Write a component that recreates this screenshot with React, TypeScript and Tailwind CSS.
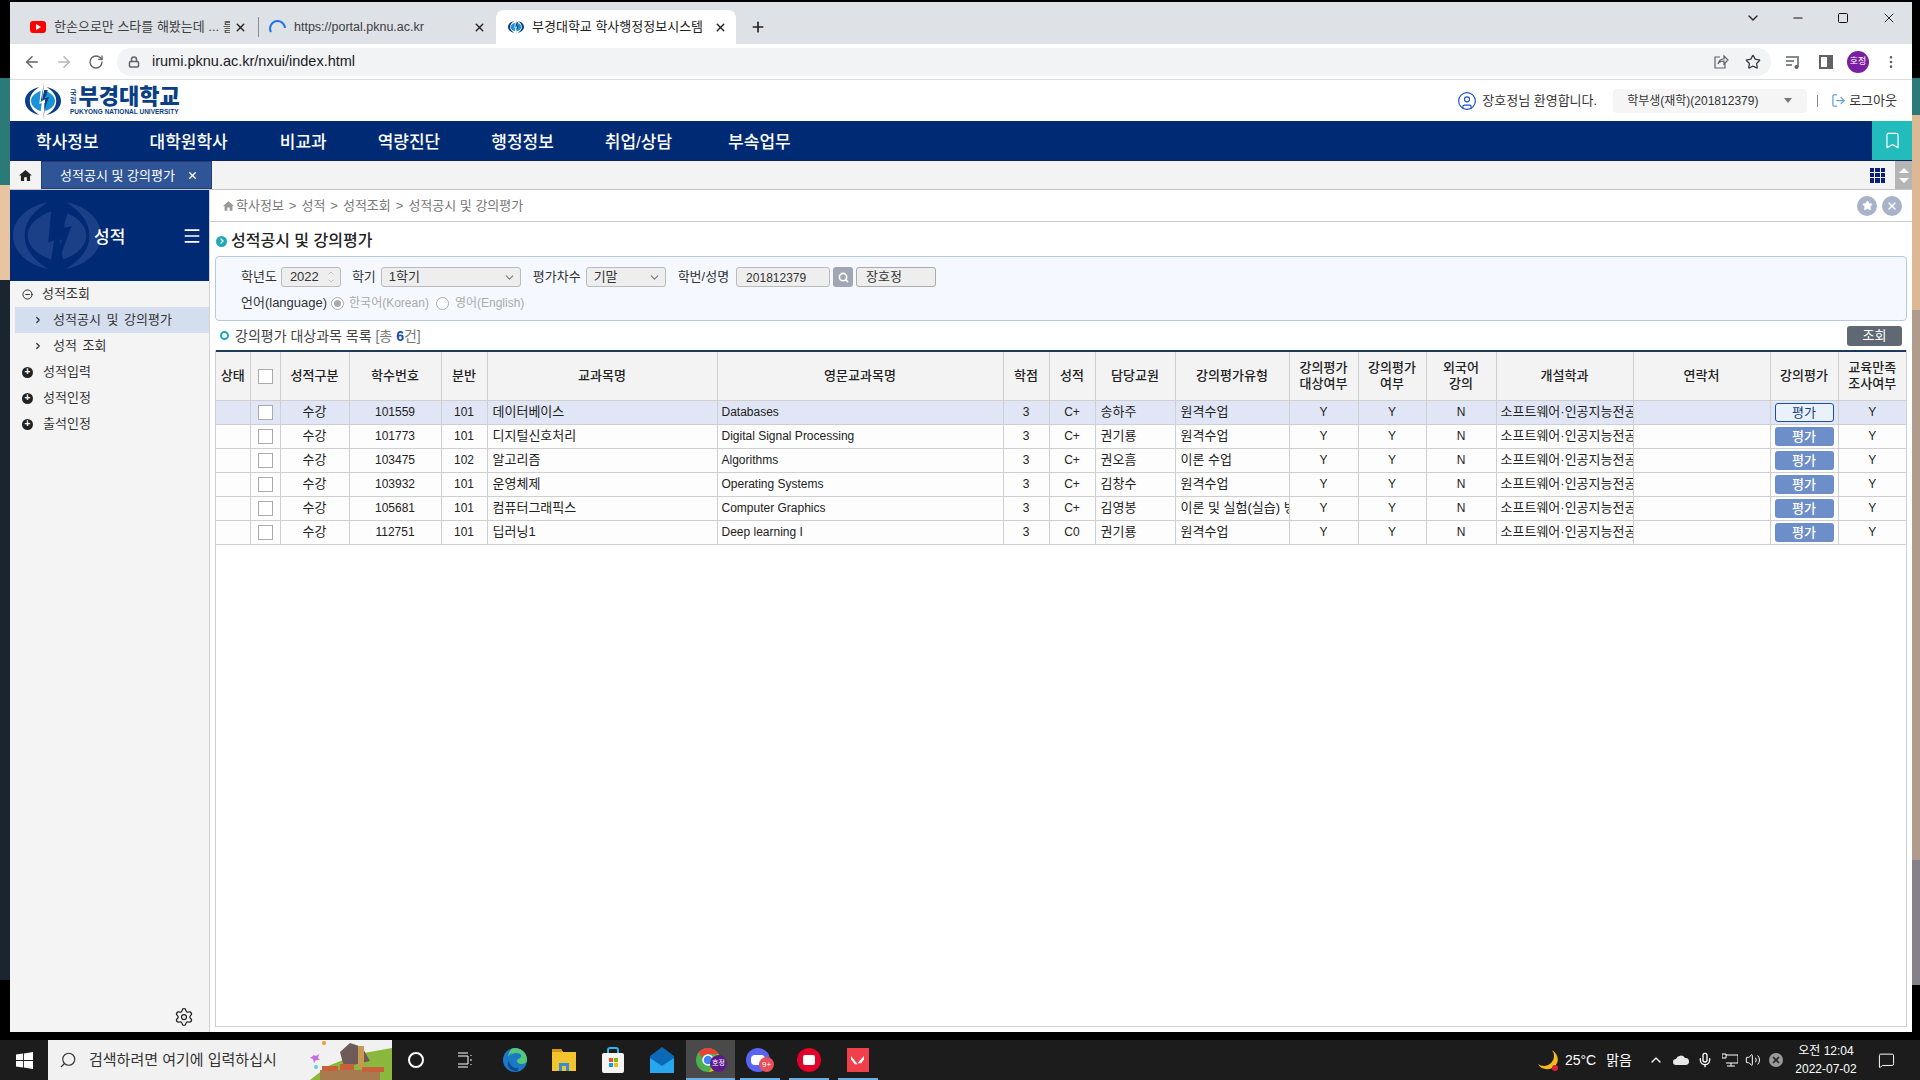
import React from 'react';
import {
  ArrowLeft, ArrowRight, RotateCw, Lock, Star, Search, ChevronDown, ChevronUp, Minus, Square, X, Plus,
  Settings, Menu, Bookmark, ChevronRight, EllipsisVertical, LogOut, CircleUser, CircleMinus, Mic, Volume2,
  MessageSquare,
} from 'lucide-react';

const rows = [
  { no: '101559', sec: '101', name: '데이터베이스', en: 'Databases', grade: 'C+', prof: '송하주', type: '원격수업' },
  { no: '101773', sec: '101', name: '디지털신호처리', en: 'Digital Signal Processing', grade: 'C+', prof: '권기룡', type: '원격수업' },
  { no: '103475', sec: '102', name: '알고리즘', en: 'Algorithms', grade: 'C+', prof: '권오흠', type: '이론 수업' },
  { no: '103932', sec: '101', name: '운영체제', en: 'Operating Systems', grade: 'C+', prof: '김창수', type: '원격수업' },
  { no: '105681', sec: '101', name: '컴퓨터그래픽스', en: 'Computer Graphics', grade: 'C+', prof: '김영봉', type: '이론 및 실험(실습) 병행' },
  { no: '112751', sec: '101', name: '딥러닝1', en: 'Deep learning I', grade: 'C0', prof: '권기룡', type: '원격수업' },
];

const colWidths = [34, 30, 69, 92, 46, 230, 286, 46, 46, 80, 114, 69, 68, 70, 137, 137, 68, 68];

const Emblem = ({ outer, inner, bolt, className }: { outer: string; inner: string; bolt: string; className: string }) => (
  <svg viewBox="0 0 30 38" preserveAspectRatio="none" className={className}>
    <path d="M12 5C4 7 0 13 0 19s4 12 12 14C7 29 4 25 4 19S7 9 12 5Z" fill={outer} />
    <path d="M18 5c8 2 12 8 12 14s-4 12-12 14c5-4 8-8 8-14S23 9 18 5Z" fill={outer} />
    <path d="M13 9C8 11 5 15 5 19s3 8 8 10l1-8-2 1Z" fill={inner} />
    <path d="M17 9c5 2 8 6 8 10s-3 8-8 10l-1-8 2-1Z" fill={inner} />
    <path d="M16 0 13 20l4-3-2 21 3-21-4 2Z" fill={bolt} />
    <path d="M16 8 14 19l3-2-1 11 4-13-3 1 2-8Z" fill={bolt} />
  </svg>
);

const ChromeTabs = () => (
  <div className="flex h-[42px] bg-[#dee1e6] items-end text-[12.5px] text-[#3c4043]">
    <div className="flex items-center h-[34px] w-[248px] pl-5 pr-2">
      <span className="w-4 h-3 rounded-[3px] bg-[#ff0000] flex items-center justify-center shrink-0">
        <span className="border-l-[5px] border-l-white border-y-[3px] border-y-transparent" />
      </span>
      <span className="ml-2 w-[176px] overflow-hidden whitespace-nowrap text-[13px]">한손으로만 스타를 해봤는데 ... 를</span>
      <X size={13} strokeWidth={2.5} className="ml-1 text-[#222]" />
    </div>
    <span className="w-px h-[20px] mb-[7px] bg-[#8b8d90]" />
    <div className="flex items-center h-[34px] w-[237px] pl-2.5 pr-2">
      <svg viewBox="0 0 18 18" className="w-[18px] h-[18px] shrink-0"><path d="M2 14A7.5 7.5 0 0 1 9 3a7.5 7.5 0 0 1 7 7" fill="none" stroke="#1a73e8" strokeWidth="2" /></svg>
      <span className="ml-[7px] w-[179px] whitespace-nowrap">https://portal.pknu.ac.kr</span>
      <X size={13} strokeWidth={2.5} className="text-[#222]" />
    </div>
    <div className="flex items-center h-[34px] w-[240px] pl-3 pr-2 bg-white rounded-t-lg">
      <Emblem outer="#0a3f86" inner="#1a92d6" bolt="#0a3f86" className="w-4 h-4 shrink-0" />
      <span className="ml-2 w-[178px] whitespace-nowrap text-[#222] text-[13px]">부경대학교 학사행정정보시스템</span>
      <X size={13} strokeWidth={2.5} className="ml-1 text-[#222]" />
    </div>
    <Plus size={16} strokeWidth={2.5} className="ml-[14px] mb-[9px] text-[#222]" />
    <div className="ml-auto flex items-center self-start h-[32px]">
      <ChevronDown size={16} className="text-[#222] mr-[30px]" />
      <Minus size={14} className="text-[#111] mr-[32px]" />
      <Square size={12} className="text-[#111] mr-[32px]" />
      <X size={16} strokeWidth={1.3} className="text-[#111] mr-[15px]" />
    </div>
  </div>
);

const ChromeToolbar = () => (
  <div className="flex items-center h-[36px] bg-white border-b border-[#dadce0] text-[#5f6368]">
    <ArrowLeft size={18} className="ml-[13px]" />
    <ArrowRight size={18} className="ml-[14px] text-[#b4b6b9]" />
    <RotateCw size={16} className="ml-[15px]" />
    <div className="ml-[13px] flex items-center w-[1654px] h-[28px] rounded-full bg-[#f1f3f4]">
      <Lock size={12} strokeWidth={3} className="ml-[11px]" />
      <span className="ml-[12px] text-[14.5px] text-[#202124] pt-px">irumi.pknu.ac.kr/nxui/index.html</span>
      <svg viewBox="0 0 16 16" className="ml-auto w-[16px] h-[16px]">
        <path d="M7 3H2v11h10V9M5 10c1-4 3-5 6-5V2l4 4-4 4V7C8 7 6 8 5 10Z" fill="none" stroke="#5f6368" strokeWidth="1.2" />
      </svg>
      <Star size={16} className="ml-[16px] mr-[10px] text-[#3c4043]" />
    </div>
    <svg viewBox="0 0 16 16" className="ml-[14px] w-[16px] h-[16px]">
      <path d="M1 3h13M1 7h8M1 11h6" stroke="#5f6368" strokeWidth="1.5" fill="none" />
      <path d="M13 4v9" stroke="#5f6368" strokeWidth="1.5" />
      <circle cx="11.5" cy="13" r="2" fill="#5f6368" />
    </svg>
    <span className="ml-[18px] w-[14px] h-[14px] border-2 border-[#5f6368] border-r-[6px]" />
    <span className="ml-[14px] w-[22px] h-[22px] rounded-full bg-[#7b1fa2] text-white text-[9px] flex items-center justify-center">호정</span>
    <EllipsisVertical size={16} className="ml-[14px]" />
  </div>
);

const SiteHeader = () => (
  <div className="flex items-center h-[41px] bg-white text-[13px] text-[#333]">
    <Emblem outer="#0a3f86" inner="#1a92d6" bolt="#0a3f86" className="ml-[15px] w-[36px] h-[38px] shrink-0" />
    <div className="ml-[9px] flex flex-col w-[110px]">
      <div className="flex items-center h-[22px]">
        <span className="flex flex-col text-[7px] leading-[8px] font-bold text-[#0a3f86]"><span>국</span><span>립</span></span>
        <span className="ml-[2px] text-[22px] leading-[22px] font-black text-[#0a3f86]">부경대학교</span>
      </div>
      <span className="text-[6.5px] leading-[8px] font-bold text-[#0a3f86] whitespace-nowrap">PUKYONG NATIONAL UNIVERSITY</span>
    </div>
    <div className="ml-auto flex items-center">
      <CircleUser size={20} strokeWidth={1.4} className="text-[#1d4fc4]" />
      <span className="ml-[5px]">장호정님 환영합니다.</span>
      <div className="ml-[16px] flex items-center w-[194px] h-[24px] rounded bg-[#f5f5f5] pl-[14px] text-[12px]">
        <span>학부생(재학)(201812379)</span>
        <span className="ml-auto mr-[15px] border-t-[5px] border-t-[#777] border-x-[4px] border-x-transparent" />
      </div>
      <span className="ml-[10px] w-px h-[12px] bg-[#888]" />
      <LogOut size={15} className="ml-[13px] text-[#6b9fe0]" />
      <span className="ml-[3px] mr-[15px]">로그아웃</span>
    </div>
  </div>
);

const NavBar = () => (
  <div className="flex h-[40px] bg-[#002a73] border-b border-[#14205a]">
    <div className="flex items-center pl-[26px] pt-[4px] text-[17px] font-medium text-white">
      <span>학사정보</span>
      <span className="ml-[51px]">대학원학사</span>
      <span className="ml-[52px]">비교과</span>
      <span className="ml-[51px]">역량진단</span>
      <span className="ml-[51px]">행정정보</span>
      <span className="ml-[51px]">취업/상담</span>
      <span className="ml-[56px]">부속업무</span>
    </div>
    <div className="ml-auto w-[40px] bg-[#22bcbc] flex items-center justify-center">
      <Bookmark size={19} strokeWidth={1.5} className="text-white" />
    </div>
  </div>
);

const TabBar = () => (
  <div className="flex items-stretch h-[29px] bg-[#f3f3f3] border-b border-[#c4c4c4]">
    <div className="w-[31px] flex items-center justify-center">
      <svg viewBox="0 0 14 12" className="w-[13px] h-[11px]"><path d="M7 0 0 6h2v6h3.5V8h3v4H12V6h2Z" fill="#222" /></svg>
    </div>
    <div className="flex items-center w-[171px] bg-[#2f5597] border border-[#1e3f80] text-white text-[13px] pl-[18px] pt-px">
      <span>성적공시 및 강의평가</span>
      <X size={11} strokeWidth={3} className="ml-[12px]" />
    </div>
    <div className="ml-auto grid grid-cols-3 gap-px w-[15px] h-[15px] self-center mr-[10px]">
      {Array.from({ length: 9 }).map((_, i) => <span key={i} className="bg-[#0b1f7a]" />)}
    </div>
    <div className="w-[17px] bg-[#b5b5b5] flex flex-col items-center justify-center text-white">
      <span className="border-b-[5px] border-b-white border-x-[5px] border-x-transparent mb-[5px]" />
      <span className="border-t-[5px] border-t-white border-x-[5px] border-x-transparent" />
    </div>
  </div>
);

const Sidebar = () => (
  <div className="relative flex flex-col w-[200px] shrink-0 bg-[#f4f4f4] border-r border-[#d2d2d2] text-[13px] text-[#333]">
    <div className="relative flex items-center h-[91px] bg-[#002a73] overflow-hidden">
      <Emblem outer="#1b4088" inner="#1b4088" bolt="#002a73" className="absolute left-[3px] top-0 w-[88px] h-[91px]" />
      <span className="relative ml-[84px] pt-[4px] text-[17px] font-medium text-white">성적</span>
      <Menu size={20} className="relative ml-auto mr-[7px] text-white" />
    </div>
    <div className="flex items-center h-[26px] pl-[12px]">
      <CircleMinus size={11} className="text-[#222]" />
      <span className="ml-[9px]">성적조회</span>
    </div>
    <div className="flex items-center h-[26px] ml-[5px] pl-[18px] bg-[#d5deef]">
      <ChevronRight size={10} strokeWidth={3} />
      <span className="ml-[10px] [word-spacing:2px]">성적공시 및 강의평가</span>
    </div>
    <div className="flex items-center h-[26px] ml-[5px] pl-[18px]">
      <ChevronRight size={10} strokeWidth={3} />
      <span className="ml-[10px] [word-spacing:2px]">성적 조회</span>
    </div>
    {['성적입력', '성적인정', '출석인정'].map((t) => (
      <div key={t} className="flex items-center h-[26px] pl-[12px]">
        <span className="w-[11px] h-[11px] rounded-full bg-[#222] text-white text-[10px] leading-[10px] font-bold flex items-center justify-center">+</span>
        <span className="ml-[10px]">{t}</span>
      </div>
    ))}
    <Settings size={20} strokeWidth={1.5} className="mt-auto mb-[5px] ml-[164px] text-[#222]" />
  </div>
);

const FieldLabel = ({ children, className }: { children: React.ReactNode; className: string }) => (
  <span className={`text-[13px] text-[#333] whitespace-nowrap ${className}`}>{children}</span>
);

const Select = ({ value, className }: { value: string; className: string }) => (
  <div className={`flex items-center h-[20px] bg-[#eeeeee] border border-[#bbb] rounded-[3px] ${className}`}>
    <span>{value}</span>
    <ChevronDown size={13} className="ml-auto mr-[4px] text-[#777]" />
  </div>
);

const SearchBox = () => (
  <div className="flex flex-col h-[65px] w-[1692px] bg-[#f5f8ff] border border-[#b8c8e4] rounded-[4px] text-[13px] text-[#333]">
    <div className="flex items-center h-[20px] mt-[10px] pl-[25px]">
      <FieldLabel className="">학년도</FieldLabel>
      <div className="ml-[4px] flex items-center w-[60px] h-[20px] pl-[8px] bg-[#eeeeee] border border-[#bbb] rounded-[3px]">
        <span>2022</span>
        <span className="ml-auto mr-[5px] flex flex-col text-[#aaa]"><ChevronUp size={8} /><ChevronDown size={8} /></span>
      </div>
      <FieldLabel className="ml-[11px]">학기</FieldLabel>
      <Select value="1학기" className="ml-[5px] w-[140px] pl-[7px]" />
      <FieldLabel className="ml-[12px]">평가차수</FieldLabel>
      <Select value="기말" className="ml-[5px] w-[80px] pl-[7px]" />
      <FieldLabel className="ml-[12px]">학번/성명</FieldLabel>
      <div className="ml-[7px] flex items-center w-[94px] h-[20px] pl-[9px] bg-[#eeeeee] border border-[#bbb] rounded-[3px] text-[12px] pt-px">201812379</div>
      <div className="ml-[3px] flex items-center justify-center w-[20px] h-[20px] bg-[#a0a6b3] rounded-[3px]">
        <Search size={11} strokeWidth={3.5} className="text-white" />
      </div>
      <div className="ml-[3px] flex items-center w-[80px] h-[20px] pl-[9px] bg-[#eeeeee] border border-[#aaa] rounded-[3px]">장호정</div>
    </div>
    <div className="flex items-center h-[20px] mt-[6px] pl-[25px]">
      <FieldLabel className="">언어(language)</FieldLabel>
      <span className="ml-[4px] flex items-center justify-center w-[13px] h-[13px] rounded-full border border-[#aaa] bg-white">
        <span className="w-[7px] h-[7px] rounded-full bg-[#aaa]" />
      </span>
      <span className="ml-[5px] text-[#aaa] text-[12px]">한국어(Korean)</span>
      <span className="ml-[7px] w-[13px] h-[13px] rounded-full border border-[#aaa] bg-white" />
      <span className="ml-[6px] text-[#aaa] text-[12px]">영어(English)</span>
    </div>
  </div>
);

const headers = ['상태', '', '성적구분', '학수번호', '분반', '교과목명', '영문교과목명', '학점', '성적', '담당교원', '강의평가유형'];

const GradesTable = () => (
  <div className="flex-1 w-[1692px] border-x border-b border-[#cfcfcf] overflow-hidden">
    <table className="table-fixed border-collapse text-[13px] text-[#222] w-[1690px] border-t-2 border-t-[#1b3a5c]">
      <colgroup>
        {colWidths.map((w, i) => <col key={i} style={{ width: w }} />)}
      </colgroup>
      <thead>
        <tr className="h-[49px] bg-[#f3f3f3] font-medium">
          {headers.map((h, i) => (
            <th key={i} className="font-medium text-center border-r border-b border-[#cfcfcf] p-0 leading-4">
              {i === 1 ? <span className="inline-block align-middle w-[15px] h-[15px] bg-white border border-[#aaa]" /> : h}
            </th>
          ))}
          <th className="font-medium border-r border-b border-[#cfcfcf] p-0 leading-4">강의평가<br />대상여부</th>
          <th className="font-medium border-r border-b border-[#cfcfcf] p-0 leading-4">강의평가<br />여부</th>
          <th className="font-medium border-r border-b border-[#cfcfcf] p-0 leading-4">외국어<br />강의</th>
          <th className="font-medium border-r border-b border-[#cfcfcf] p-0 leading-4">개설학과</th>
          <th className="font-medium border-r border-b border-[#cfcfcf] p-0 leading-4">연락처</th>
          <th className="font-medium border-r border-b border-[#cfcfcf] p-0 leading-4">강의평가</th>
          <th className="font-medium border-b border-[#cfcfcf] p-0 leading-4">교육만족<br />조사여부</th>
        </tr>
      </thead>
      <tbody>
        {rows.map((r, i) => (
          <tr key={r.no} className={`h-[24px] ${i === 0 ? 'bg-[#e0e6f5]' : 'bg-[#fdfdfd]'}`}>
            <td className="border-r border-b border-[#cfcfcf] p-0" />
            <td className="border-r border-b border-[#cfcfcf] p-0 text-center">
              <span className="inline-block align-middle w-[15px] h-[15px] bg-white border border-[#aaa]" />
            </td>
            <td className="border-r border-b border-[#cfcfcf] p-0 text-center">수강</td>
            <td className="border-r border-b border-[#cfcfcf] p-0 text-center text-[12px]">{r.no}</td>
            <td className="border-r border-b border-[#cfcfcf] p-0 text-center text-[12px]">{r.sec}</td>
            <td className="border-r border-b border-[#cfcfcf] p-0 pl-[5px]">{r.name}</td>
            <td className="border-r border-b border-[#cfcfcf] p-0 pl-[4px] text-[12px]">{r.en}</td>
            <td className="border-r border-b border-[#cfcfcf] p-0 text-center text-[12px]">3</td>
            <td className="border-r border-b border-[#cfcfcf] p-0 text-center text-[12px]">{r.grade}</td>
            <td className="border-r border-b border-[#cfcfcf] p-0 pl-[5px]">{r.prof}</td>
            <td className="border-r border-b border-[#cfcfcf] p-0 pl-[5px] overflow-hidden whitespace-nowrap">{r.type}</td>
            <td className="border-r border-b border-[#cfcfcf] p-0 text-center text-[12px]">Y</td>
            <td className="border-r border-b border-[#cfcfcf] p-0 text-center text-[12px]">Y</td>
            <td className="border-r border-b border-[#cfcfcf] p-0 text-center text-[12px]">N</td>
            <td className="border-r border-b border-[#cfcfcf] p-0 pl-[4px] overflow-hidden whitespace-nowrap">소프트웨어·인공지능전공</td>
            <td className="border-r border-b border-[#cfcfcf] p-0" />
            <td className="border-r border-b border-[#cfcfcf] p-0">
              <button className={`block mx-auto w-[59px] h-[19px] rounded-[3px] text-[13px] leading-[15px] ${i === 0 ? 'bg-[#eaf1fb] border border-[#1a4fa0] text-[#1a3f85]' : 'bg-[#6c8ec9] text-white font-medium'}`}>평가</button>
            </td>
            <td className="border-b border-[#cfcfcf] p-0 text-center text-[12px]">Y</td>
          </tr>
        ))}
      </tbody>
    </table>
  </div>
);

const Main = () => (
  <div className="flex flex-col flex-1 min-w-0 bg-white">
    <div className="flex items-center h-[32px] border-b border-[#cccccc] pl-[13px] text-[13px] text-[#777]">
      <svg viewBox="0 0 14 12" className="w-[11px] h-[10px]"><path d="M7 0 0 6h2v6h3.5V8h3v4H12V6h2Z" fill="#999" /></svg>
      <span className="ml-[2px] flex gap-[5px]">
        <span>학사정보</span><span>&gt;</span><span>성적</span><span>&gt;</span><span>성적조회</span><span>&gt;</span><span>성적공시 및 강의평가</span>
      </span>
      <span className="ml-auto flex gap-[5px] mr-[10px]">
        <span className="w-[20px] h-[20px] rounded-full bg-[#a8b2c8] flex items-center justify-center"><Star size={11} fill="white" className="text-white" /></span>
        <span className="w-[20px] h-[20px] rounded-full bg-[#a8b2c8] flex items-center justify-center"><X size={12} strokeWidth={3} className="text-white" /></span>
      </span>
    </div>
    <div className="flex items-center h-[34px] pl-[6px] pt-[4px]">
      <span className="w-[11px] h-[11px] rounded-full bg-[#1fa8b8] flex items-center justify-center"><ChevronRight size={8} strokeWidth={4} className="text-white" /></span>
      <span className="ml-[4px] text-[16px] font-medium text-[#222]">성적공시 및 강의평가</span>
    </div>
    <div className="pl-[5px] flex flex-col flex-1 pb-[5px]">
      <SearchBox />
      <div className="flex items-center h-[29px] w-[1692px]">
        <span className="ml-[5px] w-[9px] h-[9px] rounded-full border-[2.5px] border-[#1fa8b8]" />
        <span className="ml-[6px] pt-px text-[14px] text-[#444]">강의평가 대상과목 목록 <span className="text-[#777]">[총 <b className="text-[#1a4fa0]">6</b>건]</span></span>
        <span className="ml-auto mr-[5px] flex items-center justify-center w-[55px] h-[20px] rounded-[3px] bg-[#606873] text-white text-[13px]">조회</span>
      </div>
      <GradesTable />
    </div>
  </div>
);

const TaskSlot = ({ children, className }: { children: React.ReactNode; className: string }) => (
  <div className={`relative flex items-center justify-center w-[49px] h-full ${className}`}>{children}</div>
);

const Taskbar = () => (
  <div className="flex h-[40px] bg-[#1c1c1c] text-white items-center">
    <div className="w-[48px] flex justify-center">
      <svg viewBox="0 0 16 16" className="w-[17px] h-[17px]"><path d="M0 2.3 6.6 1.4v6.2H0ZM7.4 1.3 16 0v7.6H7.4ZM0 8.4h6.6v6.2L0 13.7ZM7.4 8.4H16V16l-8.6-1.3Z" fill="white" /></svg>
    </div>
    <div className="relative flex items-center w-[344px] h-[40px] bg-[#f1f1f1] overflow-hidden text-[#333]">
      <Search size={18} strokeWidth={1.5} className="ml-[11px] -scale-x-100" />
      <span className="ml-[12px] text-[15px] whitespace-nowrap">검색하려면 여기에 입력하십시</span>
      <svg viewBox="0 0 82 40" className="absolute right-0 top-0 w-[82px] h-[40px]">
        <circle cx="14" cy="3" r="2" fill="#f0a020" />
        <path d="M3 15l3 1 3-2-1 4 2 2-4 0-2 3-1-4-3-1 3-2Z" fill="#c86ae0" />
        <circle cx="6" cy="27" r="2" fill="#5cd0e8" />
        <path d="M0 40 18 26l30-12 34-6v32Z" fill="#8ab83c" />
        <path d="M30 12 40 3l12 4 8 14-26 6Z" fill="#6e5a58" />
        <rect x="48" y="6" width="6" height="22" fill="#c89a50" />
        <path d="M10 30h60v10H10Z" fill="#a87a50" />
        <path d="M12 26h16v5H12ZM30 24h14v6H30ZM52 27h22v5H52Z" fill="#c9603c" />
      </svg>
    </div>
    <TaskSlot className="!w-[48px]"><span className="w-[16px] h-[16px] rounded-full border-[2.5px] border-white" /></TaskSlot>
    <TaskSlot className="!w-[50px]">
      <svg viewBox="0 0 16 16" className="w-[16px] h-[16px]"><path d="M1 1h10M1 15h10M1 4h10v8H1M14 3v1M14 7v2M14 12v1" fill="none" stroke="white" strokeWidth="1" /></svg>
    </TaskSlot>
    <TaskSlot className="">
      <svg viewBox="0 0 24 24" className="w-[24px] h-[24px]"><circle cx="12" cy="12" r="12" fill="#1b78c4" /><path d="M12 0a12 12 0 0 1 12 12c0 3-3 4-6 4-2 0-4-1-4-3 0-3 5-2 4-6-1-2-6-3-10 0C10 3 7 6 5 9c1-6 3-9 7-9Z" fill="#52c878" /><path d="M6 12c0 5 4 9 10 8l-2 3C6 23 3 17 6 12Z" fill="#0d4a94" /></svg>
    </TaskSlot>
    <TaskSlot className="">
      <svg viewBox="0 0 24 22" className="w-[24px] h-[22px]"><path d="M0 0h9l2 3h13v19H0Z" fill="#f4c430" /><path d="M0 0h9l2 3H0Z" fill="#d9960f" /><path d="M7 22v-8h10v8h-3v-5h-4v5Z" fill="#2f8fd8" /></svg>
    </TaskSlot>
    <TaskSlot className="">
      <svg viewBox="0 0 22 26" className="w-[22px] h-[26px]"><path d="M6 6V3a2 2 0 0 1 2-2h6a2 2 0 0 1 2 2v3" fill="none" stroke="#29b6e8" strokeWidth="2" /><rect y="6" width="22" height="20" rx="2" fill="#f4f4f4" /><path d="M7 11h4v4H7Z" fill="#f25022" /><path d="M12 11h4v4h-4Z" fill="#7fba00" /><path d="M7 16h4v4H7Z" fill="#00a4ef" /><path d="M12 16h4v4h-4Z" fill="#ffb900" /></svg>
    </TaskSlot>
    <TaskSlot className="">
      <svg viewBox="0 0 24 26" className="w-[24px] h-[26px]"><path d="M12 0 24 9v17H0V9Z" fill="#0a6ab8" /><path d="M0 11 12 19l12-8v15H0Z" fill="#27a8ee" /><path d="M3 9 12 2l9 7-9 7Z" fill="#0a6ab8" /></svg>
    </TaskSlot>
    <TaskSlot className="bg-[#4a4a4a]">
      <svg viewBox="0 0 24 24" className="w-[24px] h-[24px] -ml-[6px]"><circle cx="12" cy="12" r="12" fill="#4caf50" /><path d="M12 0a12 12 0 0 1 10.4 6H12a6 6 0 0 0-5.8 4.5L3 4a12 12 0 0 1 9-4Z" fill="#ea4335" /><path d="M22.4 6A12 12 0 0 1 13 24l5-8.5A6 6 0 0 0 17 8Z" fill="#fbbc05" /><circle cx="12" cy="12" r="5" fill="#4285f4" stroke="white" strokeWidth="1.5" /></svg>
      <span className="absolute left-[24px] top-[15px] w-[17px] h-[17px] rounded-full bg-[#5c1a8c] text-[7px] flex items-center justify-center">호정</span>
      <span className="absolute bottom-0 inset-x-0 h-[2px] bg-[#6ab0e4]" />
    </TaskSlot>
    <TaskSlot className="">
      <span className="w-[24px] h-[24px] rounded-full bg-[#5865f2] flex items-center justify-center -ml-[4px]">
        <span className="w-[14px] h-[10px] rounded-[4px] bg-white" />
      </span>
      <span className="absolute left-[24px] top-[17px] w-[15px] h-[15px] rounded-full bg-[#e8505b] text-[8px] flex items-center justify-center">9+</span>
      <span className="absolute bottom-0 left-[5px] w-[40px] h-[2px] bg-[#6ab0e4]" />
    </TaskSlot>
    <TaskSlot className="">
      <span className="w-[24px] h-[24px] rounded-full bg-[#e3002b] flex items-center justify-center">
        <span className="w-[12px] h-[10px] rounded-[2px] bg-white" />
      </span>
      <span className="absolute bottom-0 left-[5px] w-[40px] h-[2px] bg-[#6ab0e4]" />
    </TaskSlot>
    <TaskSlot className="">
      <span className="w-[22px] h-[24px] bg-[#f0404c] flex items-center justify-center">
        <svg viewBox="0 0 14 12" className="w-[13px] h-[11px]"><path d="M0 1 7 10H4L0 5ZM14 1v4l-3 4H7Z" fill="white" /></svg>
      </span>
      <span className="absolute bottom-0 left-[5px] w-[40px] h-[2px] bg-[#6ab0e4]" />
    </TaskSlot>
    <div className="ml-auto flex items-center text-[13px]">
      <svg viewBox="0 0 22 22" className="w-[22px] h-[22px]"><path d="M15 1a10 10 0 0 1-14 14c3 6 12 7 17 2S21 5 15 1Z" fill="#f5b81e" /><circle cx="18" cy="19" r="3" fill="#e01e3c" /></svg>
      <span className="ml-[6px] text-[14px]">25°C</span>
      <span className="ml-[10px] text-[14px]">맑음</span>
      <ChevronUp size={16} className="ml-[16px]" />
      <svg viewBox="0 0 16 10" className="ml-[9px] w-[16px] h-[10px]"><path d="M3 10a3 3 0 0 1 0-6 5 5 0 0 1 9-1 3.5 3.5 0 0 1 1 7Z" fill="#e8e8e8" /></svg>
      <Mic size={16} className="ml-[8px]" />
      <svg viewBox="0 0 16 14" className="ml-[9px] w-[16px] h-[14px]"><path d="M0 1h4v4H0ZM4 2h12v8H4M9 10v3M5 13h8" fill="none" stroke="white" /></svg>
      <Volume2 size={16} strokeWidth={1.5} className="ml-[7px]" />
      <span className="ml-[8px] w-[14px] h-[14px] rounded-full bg-[#9a9a9a] flex items-center justify-center"><X size={10} strokeWidth={4} className="text-[#222]" /></span>
      <div className="ml-[7px] w-[72px] flex flex-col items-center text-[12px] leading-[18px]">
        <span>오전 12:04</span>
        <span>2022-07-02</span>
      </div>
      <MessageSquare size={17} strokeWidth={1.4} className="ml-[16px] mr-[25px]" />
    </div>
  </div>
);

export default function App() {
  return (
    <div className="flex flex-col w-[1920px] h-[1080px] bg-black overflow-hidden font-['Liberation_Sans','Noto_Sans_CJK_KR',sans-serif]">
      <div className="flex flex-1 min-h-0">
        <div className="flex flex-col w-[10px] shrink-0">
          <div className="h-[78px] bg-black" />
          <div className="h-[107px] bg-[#2b7a78]" />
          <div className="h-[95px] bg-[#e8c4a0]" />
          <div className="h-[700px] bg-[#1a2530]" />
        </div>
        <div className="flex flex-col w-[1902px] h-[1030px] mt-[2px] shrink-0">
          <ChromeTabs />
          <ChromeToolbar />
          <SiteHeader />
          <NavBar />
          <TabBar />
          <div className="flex flex-1 min-h-0">
            <Sidebar />
            <Main />
          </div>
        </div>
        <div className="flex flex-col w-[8px] shrink-0">
          <div className="h-[78px] bg-black" />
          <div className="h-[37px] bg-[#2b7a78]" />
          <div className="h-[195px] bg-[#dcb894]" />
          <div className="h-[550px] bg-[#b09c8c]" />
          <div className="h-[125px] bg-[#85808a]" />
        </div>
      </div>
      <Taskbar />
    </div>
  );
}
